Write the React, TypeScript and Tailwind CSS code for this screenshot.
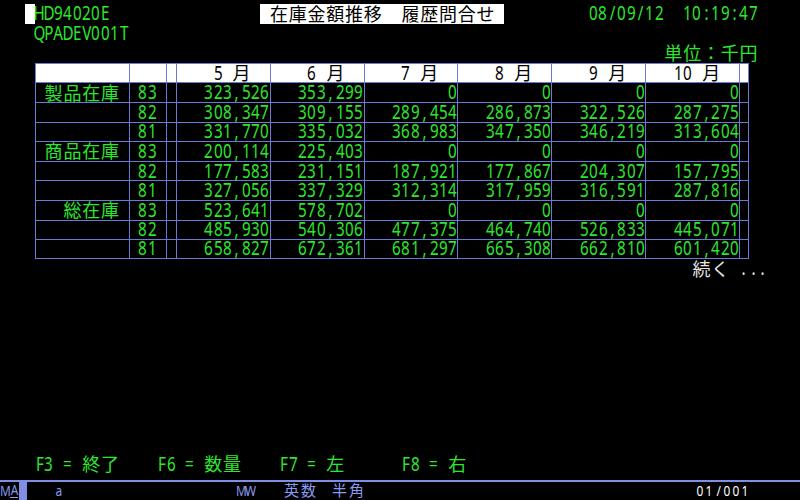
import type { ReactNode } from 'react';

const MONTHS = ['5 月', '6 月', '7 月', '8 月', '9 月', '10 月'];

const ROWS = [
  { label: '製品在庫', code: '83', values: ['323,526', '353,299', '0', '0', '0', '0'] },
  { label: '', code: '82', values: ['308,347', '309,155', '289,454', '286,873', '322,526', '287,275'] },
  { label: '', code: '81', values: ['331,770', '335,032', '368,983', '347,350', '346,219', '313,604'] },
  { label: '商品在庫', code: '83', values: ['200,114', '225,403', '0', '0', '0', '0'] },
  { label: '', code: '82', values: ['177,583', '231,151', '187,921', '177,867', '204,307', '157,795'] },
  { label: '', code: '81', values: ['327,056', '337,329', '312,314', '317,959', '316,591', '287,816'] },
  { label: '総在庫', code: '83', values: ['523,641', '578,702', '0', '0', '0', '0'] },
  { label: '', code: '82', values: ['485,930', '540,306', '477,375', '464,740', '526,833', '445,071'] },
  { label: '', code: '81', values: ['658,827', '672,361', '681,297', '665,308', '662,810', '601,420'] },
];

// one terminal cell per character, full-width glyphs take two
function Chars({ text, small = false }: { text: string; small?: boolean }) {
  return (
    <>
      {Array.from(text).map((ch, i) => {
        const wide = ch.charCodeAt(0) > 0xff;
        const width = small ? (wide ? 'w-[17px]' : 'w-[9px]') : wide ? 'w-[18.788px]' : 'w-[9.394px]';
        const blank = ch === ' ' || ch === '\u3000';
        return (
          <span key={i} className={`${width} inline-flex shrink-0 justify-center`}>
            {blank ? null : wide ? (
              <span className={small ? 'text-[15px]' : 'text-[18px]'}>{ch}</span>
            ) : (
              <span className={small ? 'inline-block scale-x-[0.85] text-[14px]' : 'inline-block scale-x-[0.8] text-[19px]'}>
                {ch}
              </span>
            )}
          </span>
        );
      })}
    </>
  );
}

function Line({ children, className = '' }: { children?: ReactNode; className?: string }) {
  return <div className={`flex h-[19.6px] items-center ${className}`}>{children}</div>;
}

function TableRow({ cells, header = false, last = false }: { cells: string[]; header?: boolean; last?: boolean }) {
  const [label, code, ...values] = cells;
  const rowCls = header ? 'bg-white text-black' : 'text-[#2ee62e]';
  return (
    <div className={`flex h-[19.6px] ${rowCls} ${last ? 'border-b border-[#6a7ad8]' : ''}`}>
      <div className="flex w-[93.94px] items-center justify-end border-l border-t border-[#6a7ad8] pr-[9.394px]">
        <Chars text={label} />
      </div>
      <div className="flex w-[37.576px] items-center justify-end border-l border-t border-[#6a7ad8] pr-[9.394px]">
        <Chars text={code} />
      </div>
      <div className="w-[9.394px] border-l border-t border-[#6a7ad8]" />
      {values.map((v, i) => (
        <div
          key={i}
          className={`flex w-[93.94px] items-center justify-end border-l border-t border-[#6a7ad8] ${header ? 'pr-[18.788px]' : ''}`}
        >
          <Chars text={v} />
        </div>
      ))}
      <div className="w-[9.394px] border-x border-t border-[#6a7ad8]" />
    </div>
  );
}

export default function App() {
  return (
    <div className="flex h-[500px] w-[800px] flex-col overflow-hidden bg-black font-['Noto_Sans','Noto_Sans_CJK_JP',sans-serif] leading-none">
      <div className="pl-[25.4px] pt-[4px] text-[#2ee62e]">
        {/* row 1 */}
        <Line>
          <span className="h-full w-[9.394px] shrink-0 bg-white" />
          <Chars text={'HD94020E' + ' '.repeat(16)} />
          <span className="flex h-full items-center bg-white text-black">
            <Chars text=" 在庫金額推移　履歴問合せ " />
          </span>
          <Chars text={' '.repeat(9) + '08/09/12  10:19:47'} />
        </Line>
        <Line>
          <Chars text=" QPADEV001T" />
        </Line>
        <Line>
          <Chars text={' '.repeat(68) + '単位：千円'} />
        </Line>

        <div className="ml-[9.394px] w-fit">
          <TableRow header cells={['', '', ...MONTHS]} />
          {ROWS.map((r, i) => (
            <TableRow key={i} last={i === ROWS.length - 1} cells={[r.label, r.code, ...r.values]} />
          ))}
        </div>

        <Line className="text-[#e6e6e6]">
          <Chars text={' '.repeat(71) + '続く ...'} />
        </Line>
        {Array.from({ length: 9 }).map((_, i) => (
          <Line key={i} />
        ))}
        <Line>
          <Chars text=" F3 = 終了    F6 = 数量    F7 = 左      F8 = 右" />
        </Line>
      </div>

      {/* status bar */}
      <div className="mt-[5.6px] h-[2px] w-full bg-[#7f8fe6]" />
      <div className="flex h-[18px] items-center text-[#8a9af0]">
        <span className="ml-[1px] inline-flex w-[9px] justify-center">
          <span className="inline-block scale-x-[0.85] text-[14px]">M</span>
        </span>
        <span className="inline-flex w-[8px] justify-center border-b border-[#8a9af0]">
          <span className="inline-block scale-x-[0.85] text-[14px]">A</span>
        </span>
        <span className="ml-[1px] h-full w-[8px] bg-[#7f8fe6]" />
        <Chars small text={'   a'} />
        <span className="ml-[3px] flex">
          <Chars small text={' '.repeat(19) + 'MW   '} />
        </span>
        <span className="ml-[1px] flex">
          <Chars small text="英数" />
        </span>
        <span className="ml-[14px] flex">
          <Chars small text="半角" />
        </span>
        <span className="ml-auto mr-[50px] flex text-white">
          <Chars small text="01/001" />
        </span>
      </div>
    </div>
  );
}
